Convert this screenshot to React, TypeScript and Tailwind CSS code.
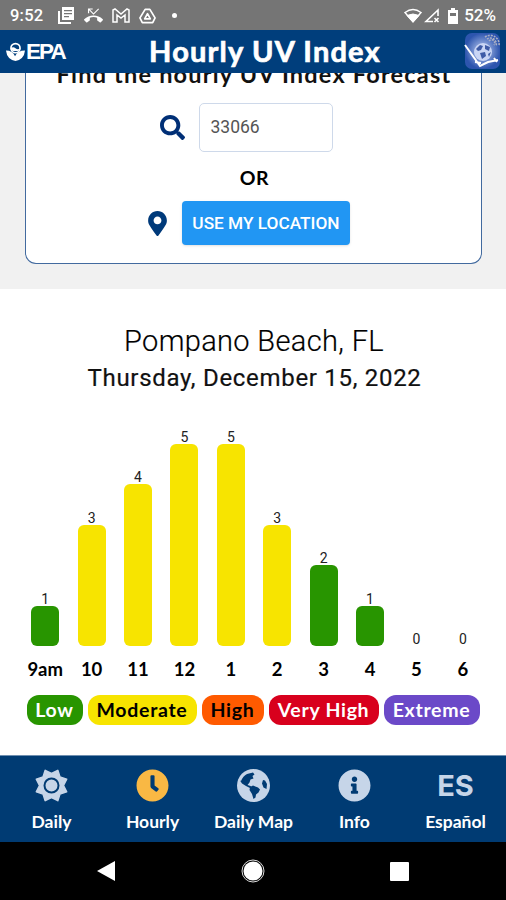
import { FaClock, FaInfoCircle, FaMapMarkerAlt, FaSearch } from 'react-icons/fa';
import { MdPhoneMissed } from 'react-icons/md';

const GREEN = 'bg-[#289500]';
const YELLOW = 'bg-[#f7e400]';

const hours = [
  { label: '9am', value: 1, color: GREEN },
  { label: '10', value: 3, color: YELLOW },
  { label: '11', value: 4, color: YELLOW },
  { label: '12', value: 5, color: YELLOW },
  { label: '1', value: 5, color: YELLOW },
  { label: '2', value: 3, color: YELLOW },
  { label: '3', value: 2, color: GREEN },
  { label: '4', value: 1, color: GREEN },
  { label: '5', value: 0, color: GREEN },
  { label: '6', value: 0, color: GREEN },
];

const levels = [
  { label: 'Low', style: 'w-14 bg-[#289500] text-white' },
  { label: 'Moderate', style: 'w-[109px] bg-[#f7e400] text-black' },
  { label: 'High', style: 'w-[62px] bg-[#ff5a00] text-black' },
  { label: 'Very High', style: 'w-[110px] bg-[#d8001d] text-white' },
  { label: 'Extreme', style: 'w-24 bg-[#6b49c8] text-white' },
];

function StatusBar() {
  return (
    <div className="flex h-[30px] items-center bg-[#757575] pr-[10px] pl-[10px] pt-px text-white">
      <span className="w-[48px] pt-px font-['Roboto',sans-serif] text-[16.5px] font-medium tracking-[0.2px]">9:52</span>
      <div className="flex items-center gap-[9px]">
        <svg className="size-[17px]" viewBox="0 0 17 17">
          <path d="M1 4v12h12" fill="none" stroke="white" strokeWidth="2" />
          <path d="M4 0h12v13H4zM6 3v1.300h8V3zM6 6v1.300h8V6zM6 9v1.300h5V9z" fill="white" fillRule="evenodd" />
        </svg>
        <MdPhoneMissed className="size-[19px]" />
        <svg className="h-[15px] w-[18px]" viewBox="0 0 18 15" fill="none" stroke="currentColor" strokeWidth="1.5">
          <path d="M1 14V2l2-1 6 5 6-5 2 1v12h-4V7l-4 3-4-3v7z" />
        </svg>
        <svg className="h-[16px] w-[17px]" viewBox="0 0 18 16" fill="none" stroke="currentColor" strokeWidth="1.8" strokeLinejoin="round">
          <path d="M6.5 1h5L17 10l-2.500 5h-11L1 10z" />
          <path d="M9 5.500 12 11H6z" />
        </svg>
        <span className="ml-[7px] size-[5px] rounded-full bg-white" />
      </div>
      <div className="ml-auto flex items-center">
        <svg className="h-4 w-[18px]" viewBox="0 0 18 16" fill="none" stroke="currentColor">
          <path d="M1 4.500q8-6 16 0L9 14z" strokeWidth="1.400" />
          <path d="M3 7.500q6-3 12 0L9 14z" fill="currentColor" />
        </svg>
        <svg className="ml-[2px] size-4" viewBox="0 0 16 16" fill="none" stroke="currentColor" strokeWidth="1.600">
          <path d="M9 13.500H2L14 2v6" />
          <path d="m10.500 10 4 4m0-4-4 4" />
        </svg>
        <svg className="mr-[6px] ml-[8px] h-4 w-[10px]" viewBox="0 0 10 16" fill="currentColor">
          <path d="M3 0h4v2h3v14H0V2h3zM2 5v3h6V5z" fillRule="evenodd" />
        </svg>
        <span className="pt-px font-['Roboto',sans-serif] text-[17px] font-medium">52%</span>
      </div>
    </div>
  );
}

function Header() {
  return (
    <header className="relative flex h-[43px] items-center justify-between bg-[#003e7c] pr-[5px] pl-[6px] text-white">
      <div className="flex items-center">
        <svg className="h-5 w-[19px]" viewBox="0 0 20 20">
          <circle cx="10" cy="6" r="4.800" fill="none" stroke="white" strokeWidth="1.800" />
          <path d="M5 6q2.500-2 5 0t5 0l-2 3H7z" fill="white" />
          <path d="M0 8.500q7 0 9.500 6 2.500-6 10.500-6-1 9.500-10 11Q1 18 0 8.500z" fill="white" />
        </svg>
        <span className="ml-px font-['Liberation_Sans',sans-serif] text-[22.5px] leading-5 font-bold tracking-[-1.9px]">EPA</span>
      </div>
      <h1 className="absolute inset-x-0 top-[5px] pl-6 text-center text-[29px] leading-8 font-bold tracking-[1.2px] [-webkit-text-stroke:0.7px_white]">
        Hourly UV Index
      </h1>
      <GlobeLogo />
    </header>
  );
}

function GlobeLogo() {
  return (
    <svg className="mb-1 size-[38px]" viewBox="0 0 38 38">
      <defs>
        <radialGradient id="glow">
          <stop offset="0" stopColor="#c3d1f4" />
          <stop offset="1" stopColor="#2d55ae" />
        </radialGradient>
      </defs>
      <rect x="2" y="2" width="35" height="36" rx="7" fill="url(#glow)" />
      <path
        d="M22 6a9 9 0 0 1 14 9M24 8a6 6 0 0 1 9 7M26 10a3 3 0 0 1 5 4"
        fill="none"
        stroke="#a9afc4"
        strokeWidth="1.600"
        strokeDasharray="2 1"
      />
      <circle cx="20" cy="21" r="9" fill="#c9d5f4" />
      <path d="m13 18 4-4 3 1-2 4-3 1zM22 14l5 2-1 4-4-2zM17 22l5-1 1 4-4 3zM25 23l3-2-2 5z" fill="#3e5ba6" />
      <path d="m2 14 15 21 8-4 10-2M31 27l3 4M12 31l6 1" fill="none" stroke="white" strokeWidth="2" />
    </svg>
  );
}

function LocationSearch() {
  return (
    <section className="h-[216px] overflow-hidden bg-[#f1f1f1] pr-6 pl-[25px]">
      <div className="flex h-[191px] flex-col items-center rounded-b-[11px] border border-t-0 border-[#426a9f] bg-white">
        <h2 className="-mt-[14px] h-[44px] pl-px text-[23.5px] leading-[30px] font-bold tracking-[1.2px] whitespace-nowrap text-[#111]">
          Find the hourly UV Index Forecast
        </h2>
        <div className="mr-[15px] flex items-center gap-[14px]">
          <FaSearch className="size-[25px] text-[#002f76]" />
          <div className="flex h-[49px] w-[134px] items-center rounded-[5px] border border-[#ced9ea] px-[11px] font-['Roboto',sans-serif] text-[17.500px] text-[#555]">
            33066
          </div>
        </div>
        <p className="mt-[12px] pl-[2px] text-[19.500px] leading-7 font-bold tracking-[0.5px]">OR</p>
        <div className="mt-[9px] mr-[10px] flex items-center gap-[15px]">
          <FaMapMarkerAlt className="h-[25px] w-[19px] text-[#003a7a]" />
          <button className="h-11 w-[168px] rounded-sm bg-[#2196f3] pt-px pl-px font-['Roboto',sans-serif] text-[17.250px] font-medium whitespace-nowrap text-white shadow-sm">
            USE MY LOCATION
          </button>
        </div>
      </div>
    </section>
  );
}

function Forecast() {
  return (
    <main className="h-[466px] bg-white pt-[35px]">
      <h2 className="pl-[2px] text-center font-['Roboto',sans-serif] text-[29px] leading-[34px] font-light tracking-[0.350px] text-black [-webkit-text-stroke:0.2px_black]">
        Pompano Beach, FL
      </h2>
      <p className="mt-1 pl-[3px] text-center font-['Roboto',sans-serif] text-[24px] leading-8 tracking-[0.700px] text-[#111] [-webkit-text-stroke:0.2px_#111]">
        Thursday, December 15, 2022
      </p>
      <div className="mt-[32px] flex h-[220px] items-end pr-5 pl-[22px]">
        {hours.map((hour) => (
          <div key={hour.label} className="flex flex-1 flex-col items-center">
            <span className="font-['Roboto',sans-serif] text-[14px] leading-[13px] text-[#222]">{hour.value}</span>
            <div className={`w-7 rounded-md ${hour.color}`} style={{ height: hour.value * 40.5 }} />
          </div>
        ))}
      </div>
      <div className="mt-[9px] flex pr-5 pl-[22px]">
        {hours.map((hour) => (
          <span key={hour.label} className="flex-1 text-center text-[18.500px] leading-7 font-bold">
            {hour.label}
          </span>
        ))}
      </div>
      <div className="mt-3 flex justify-center gap-[5px]">
        {levels.map((level) => (
          <span key={level.label} className={`h-[30px] rounded-xl text-center text-[19.500px] leading-[29px] font-bold tracking-[0.700px] whitespace-nowrap ${level.style}`}>
            {level.label}
          </span>
        ))}
      </div>
    </main>
  );
}

function SunIcon() {
  return (
    <svg className="size-[33px]" viewBox="-16.5 -16.5 33 33">
      <path
        d="M6.300-15.200 8.500-8.500 15.200-6.300 12 0 15.200 6.300 8.500 8.500 6.300 15.200 0 12-6.300 15.200-8.500 8.500-15.200 6.300-12 0-15.200-6.300-8.500-8.500-6.300-15.200 0-12z"
        fill="currentColor"
        stroke="currentColor"
        strokeWidth="1.500"
        strokeLinejoin="round"
      />
      <circle r="7" fill="none" stroke="#003b73" strokeWidth="2" />
    </svg>
  );
}

function EarthIcon() {
  return (
    <svg className="size-[33px]" viewBox="0 0 33 33">
      <circle cx="16.500" cy="16.500" r="16.500" fill="currentColor" />
      <g fill="#003b73">
        <path d="M4 12q2-5 6-7l6-1.500 1.500 2-2 1.500 1 2.500-3 1-1 3-2 2.500 3 1 1.500 1.500-2 .5-4-2-4-2.500-2-3z" />
        <path d="m13 18 3-1.500 5 2 2 2-1.500 3-2.500 2-.5 3-2 1.500-1.500-5-2.500-4z" />
        <path d="m26 11 2 .5 2 3.500-.5 5-3-1.500-1.500-4z" />
      </g>
    </svg>
  );
}

function TabBar() {
  return (
    <nav className="grid h-[87px] grid-cols-5 border-t border-[#6f8fb0] bg-[#003b73] pl-px text-center text-[17.500px] font-bold text-white">
      <Tab label="Daily" icon={<SunIcon />} />
      <Tab label="Hourly" icon={<FaClock className="size-[33px] text-[#f9b844]" />} />
      <Tab label="Daily Map" icon={<EarthIcon />} />
      <Tab label="Info" icon={<FaInfoCircle className="size-[33px]" />} />
      <Tab label="Español" icon={<span className="font-['Inter',sans-serif] text-[29px] font-bold">ES</span>} />
    </nav>
  );
}

function Tab({ label, icon }: { label: string; icon: React.ReactNode }) {
  return (
    <div className="flex flex-col items-center pt-[13px]">
      <span className="flex h-[33px] items-center text-[#c6d5e8]">{icon}</span>
      <span className="mt-[6px] leading-7 whitespace-nowrap">{label}</span>
    </div>
  );
}

function SystemNav() {
  return (
    <div className="flex h-[58px] items-center justify-between bg-black px-[97px]">
      <svg className="h-[22px] w-[18px]" viewBox="0 0 18 22">
        <path d="M18 1v20L0 11z" fill="white" />
      </svg>
      <svg className="size-6" viewBox="0 0 24 24">
        <circle cx="12" cy="12" r="11" fill="none" stroke="#ddd" />
        <circle cx="12" cy="12" r="9.500" fill="white" />
      </svg>
      <span className="size-[19px] rounded-[1px] bg-white" />
    </div>
  );
}

export default function App() {
  return (
    <div className="h-[900px] w-[506px] overflow-hidden bg-white font-['Lato',sans-serif] text-black">
      <StatusBar />
      <Header />
      <LocationSearch />
      <Forecast />
      <TabBar />
      <SystemNav />
    </div>
  );
}
